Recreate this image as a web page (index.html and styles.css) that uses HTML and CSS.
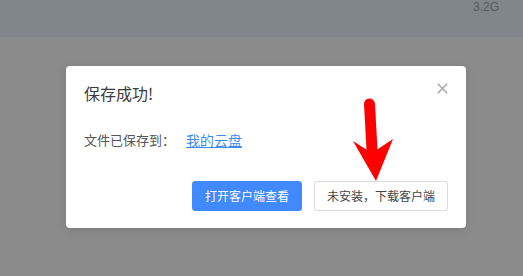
FILE: index.html
```html
<!DOCTYPE html>
<html lang="zh-CN">
<head>
<meta charset="utf-8">
<link rel="stylesheet" href="styles.css">
</head>
<body>
<div class="topbar"><span class="size">3.2G</span></div>
<div class="overlay">
  <div class="dialog">
    <div class="header">
      <div class="title">保存成功!</div>
      <svg class="close" width="11" height="11" viewBox="0 0 11 11"><path d="M0.8 0.8L10.2 10.2M10.2 0.8L0.8 10.2" stroke="#a6a9ae" stroke-width="1.6" fill="none"/></svg>
    </div>
    <div class="body"><span class="label">文件已保存到：</span><a class="link" href="#">我的云盘</a></div>
    <div class="footer">
      <button class="btn primary">打开客户端查看</button>
      <button class="btn plain">未安装，下载客户端</button>
    </div>
  </div>
</div>
<svg class="arrow" width="523" height="276" viewBox="0 0 523 276">
  <line x1="369.5" y1="104" x2="372" y2="150" stroke="#ff0000" stroke-width="11" stroke-linecap="round"/>
  <polygon points="353,141 367,150 378,149 393,139 376,181" fill="#ff0000"/>
</svg>
</body>
</html>
```
FILE: styles.css
```css
html, body {
  margin: 0;
  padding: 0;
}
body {
  width: 523px;
  height: 276px;
  overflow: hidden;
  background: #8b8b8b;
  font-family: "Noto Sans CJK SC", "Noto Sans", "Liberation Sans", sans-serif;
  position: relative;
}
.topbar {
  height: 37px;
  background: #81858c;
  display: flex;
  justify-content: flex-end;
}
.size {
  font-family: "Liberation Sans", Arial, sans-serif;
  font-size: 12px;
  color: #555a61;
  line-height: 14px;
  margin-right: 24px;
  margin-top: 0;
}
.overlay {
  padding-top: 29px;
  padding-left: 66px;
}
.dialog {
  width: 400px;
  height: 162px;
  box-sizing: border-box;
  background: #fff;
  border-radius: 4px;
  box-shadow: 0 2px 10px rgba(0,0,0,0.12);
  padding: 15px 18px 16px 18px;
  display: flex;
  flex-direction: column;
}
.header {
  display: flex;
  justify-content: space-between;
  align-items: flex-start;
  height: 24px;
}
.title {
  font-size: 16px;
  line-height: 24px;
  color: #3a3a3a;
}
.close {
  margin-top: 2px;
  margin-right: 0;
}
.body {
  margin-top: 25px;
  line-height: 20px;
  font-size: 13px;
  color: #555;
  display: flex;
  align-items: center;
}
.label {
  margin-right: 11px;
}
.link {
  font-size: 14px;
  color: #3d8cf5;
  text-decoration: underline;
}
.footer {
  margin-top: 31px;
  display: flex;
  justify-content: flex-end;
  gap: 12px;
}
.btn {
  height: 30px;
  padding: 0 12px;
  font-family: inherit;
  font-size: 12px;
  border-radius: 3px;
  box-sizing: border-box;
  line-height: 28px;
  cursor: pointer;
}
.primary {
  background: #4089ff;
  border: 1px solid #4089ff;
  color: #fff;
  width: 110px;
}
.plain {
  background: #fff;
  border: 1px solid #d9dbe0;
  color: #444;
  width: 134px;
}
.arrow {
  position: absolute;
  left: 0;
  top: 0;
  pointer-events: none;
}
```
